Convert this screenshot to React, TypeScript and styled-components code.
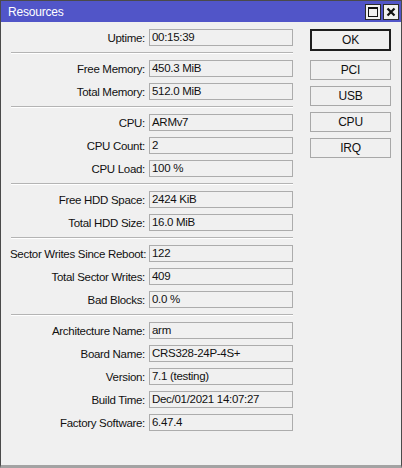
import React from 'react';
import styled, { createGlobalStyle } from 'styled-components';

const GlobalStyle = createGlobalStyle`
  html, body {
    margin: 0;
    padding: 0;
    background: #f0f0f0;
  }
  * {
    box-sizing: border-box;
  }
`;

const StyledWindow = styled.div`
  width: 402px;
  height: 468px;
  display: flex;
  flex-direction: column;
  background-color: #f0f0f0;
  border: solid 1px #4a4a4a;
  border-bottom: solid 3px #a3a3a3;
  font-family: 'Liberation Sans', Arial, sans-serif;
  font-size: 11.5px;
  letter-spacing: -0.3px;
  color: #111;
`;

const StyledTitleBar = styled.div`
  height: 21px;
  flex-shrink: 0;
  display: flex;
  align-items: center;
  justify-content: space-between;
  padding: 0 2px 0 7px;
  background-color: #5155c8;
  color: #fff;
  font-size: 12px;
  letter-spacing: -0.2px;
`;

const StyledTitleButtons = styled.div`
  display: flex;
  gap: 2px;
`;

const StyledTitleButton = styled.div`
  width: 16px;
  height: 16px;
  display: flex;
  align-items: center;
  justify-content: center;
  background-color: #f0f0f0;
  border: solid 1px #2b2b2b;
`;

const StyledBody = styled.div`
  display: flex;
  padding: 7px 10px 0 9px;
`;

const StyledFields = styled.div`
  width: 284px;
  display: flex;
  flex-direction: column;
  gap: 6px;
`;

const StyledRow = styled.div`
  display: flex;
  align-items: center;
  height: 17px;
`;

const StyledLabel = styled.div`
  width: 139px;
  text-align: right;
  padding-right: 4px;
  white-space: nowrap;
`;

const StyledValue = styled.div`
  flex: 1;
  height: 17px;
  line-height: 15px;
  padding-left: 2px;
  border: solid 1px #acacac;
  background-color: #f0f0f0;
  white-space: nowrap;
`;

const StyledSeparator = styled.div`
  height: 2px;
  margin-left: 1px;
  border-top: solid 1px #b4b4b4;
  border-bottom: solid 1px #ffffff;
`;

const StyledButtons = styled.div`
  width: 81px;
  margin-left: 17px;
  display: flex;
  flex-direction: column;
  gap: 6px;
`;

const StyledButton = styled.button<{ $primary?: boolean }>`
  width: 81px;
  height: ${(p) => (p.$primary ? '22px' : '20px')};
  margin-bottom: ${(p) => (p.$primary ? '3px' : '0')};
  padding: 0;
  font-family: inherit;
  font-size: 12px;
  letter-spacing: -0.2px;
  color: #111;
  background-color: #f0f0f0;
  border: ${(p) => (p.$primary ? 'solid 2px #1e1e1e' : 'solid 1px #a8a8a8')};
`;

type Field = { label: string; value: string };

const groups: Field[][] = [
  [{ label: 'Uptime:', value: '00:15:39' }],
  [
    { label: 'Free Memory:', value: '450.3 MiB' },
    { label: 'Total Memory:', value: '512.0 MiB' },
  ],
  [
    { label: 'CPU:', value: 'ARMv7' },
    { label: 'CPU Count:', value: '2' },
    { label: 'CPU Load:', value: '100 %' },
  ],
  [
    { label: 'Free HDD Space:', value: '2424 KiB' },
    { label: 'Total HDD Size:', value: '16.0 MiB' },
  ],
  [
    { label: 'Sector Writes Since Reboot:', value: '122' },
    { label: 'Total Sector Writes:', value: '409' },
    { label: 'Bad Blocks:', value: '0.0 %' },
  ],
  [
    { label: 'Architecture Name:', value: 'arm' },
    { label: 'Board Name:', value: 'CRS328-24P-4S+' },
    { label: 'Version:', value: '7.1 (testing)' },
    { label: 'Build Time:', value: 'Dec/01/2021 14:07:27' },
    { label: 'Factory Software:', value: '6.47.4' },
  ],
];

const App = () => {
  return (
    <StyledWindow>
      <GlobalStyle />
      <StyledTitleBar>
        <span>Resources</span>
        <StyledTitleButtons>
          <StyledTitleButton>
            <svg width="10" height="10" viewBox="0 0 10 10">
              <rect x="0.5" y="0.5" width="9" height="9" fill="none" stroke="#111" />
              <rect x="0.5" y="0.5" width="9" height="1.5" fill="#111" />
            </svg>
          </StyledTitleButton>
          <StyledTitleButton>
            <svg width="10" height="10" viewBox="0 0 10 10">
              <path d="M1.5 1.5 L8.5 8.5 M8.5 1.5 L1.5 8.5" stroke="#111" strokeWidth="2.2" />
            </svg>
          </StyledTitleButton>
        </StyledTitleButtons>
      </StyledTitleBar>
      <StyledBody>
        <StyledFields>
          {groups.map((group, i) => (
            <React.Fragment key={i}>
              {i > 0 && <StyledSeparator />}
              {group.map((f) => (
                <StyledRow key={f.label}>
                  <StyledLabel>{f.label}</StyledLabel>
                  <StyledValue>{f.value}</StyledValue>
                </StyledRow>
              ))}
            </React.Fragment>
          ))}
        </StyledFields>
        <StyledButtons>
          <StyledButton $primary>OK</StyledButton>
          <StyledButton>PCI</StyledButton>
          <StyledButton>USB</StyledButton>
          <StyledButton>CPU</StyledButton>
          <StyledButton>IRQ</StyledButton>
        </StyledButtons>
      </StyledBody>
    </StyledWindow>
  );
};

export default App;
